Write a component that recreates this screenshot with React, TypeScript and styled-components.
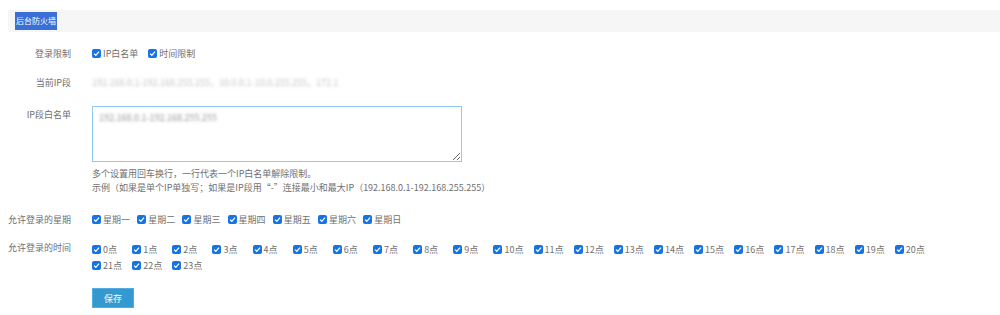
import React from 'react';
import styled, { createGlobalStyle } from 'styled-components';

const GlobalStyle = createGlobalStyle`
  html, body {
    margin: 0;
    padding: 0;
    background: #fff;
  }
  body {
    font-family: "Noto Sans CJK SC", "Noto Sans", sans-serif;
    font-size: 9px;
    color: #707070;
  }
`;

const Page = styled.div`
  padding-top: 10px;
  padding-left: 8px;
`;

const TitleBar = styled.div`
  height: 22px;
  background: #f6f6f6;
  display: flex;
  align-items: center;
  padding-left: 7px;
`;

const TitleTab = styled.div`
  height: 18px;
  padding: 0 1px;
  background: #3a6fd6;
  color: #fff;
  font-size: 8px;
  line-height: 18px;
`;

const Form = styled.div`
  display: flex;
  flex-direction: column;
`;

const Row = styled.div<{ $top: number; $align?: string }>`
  display: grid;
  grid-template-columns: 63px 1fr;
  column-gap: 21px;
  margin-top: ${(p) => p.$top}px;
  align-items: ${(p) => p.$align || 'center'};
  min-height: 20px;
`;

const Label = styled.div<{ $pad?: number }>`
  text-align: right;
  white-space: nowrap;
  color: #707070;
  padding-top: ${(p) => p.$pad || 0}px;
`;

const Field = styled.div`
  display: flex;
  flex-direction: column;
`;

const Options = styled.div<{ $width?: number }>`
  display: flex;
  flex-wrap: wrap;
  align-items: center;
  width: ${(p) => (p.$width ? `${p.$width}px` : 'auto')};
`;

const Option = styled.label<{ $width?: number; $gap?: number }>`
  display: inline-flex;
  align-items: center;
  gap: 2px;
  height: 16px;
  white-space: nowrap;
  margin-right: ${(p) => p.$gap || 0}px;
  width: ${(p) => (p.$width ? `${p.$width}px` : 'auto')};
  color: #707070;
`;

const Box = styled.span`
  width: 9px;
  height: 9px;
  border-radius: 2px;
  background: #1473e6;
  display: inline-flex;
  align-items: center;
  justify-content: center;
  flex: none;
`;

const Blurred = styled.span`
  color: transparent;
  text-shadow: 0 0 3px rgba(150, 150, 150, 0.55);
  white-space: nowrap;
`;

const TextArea = styled.textarea`
  box-sizing: border-box;
  width: 370px;
  height: 56px;
  border: 1px solid #8fcbec;
  outline: none;
  padding: 4px 6px;
  margin: 0;
  font-family: "Noto Sans CJK SC", "Noto Sans", sans-serif;
  font-size: 9px;
  line-height: 14px;
  color: transparent;
  text-shadow: 0 0 3px rgba(110, 110, 110, 0.7);
`;

const Help = styled.div`
  margin-top: 5px;
  line-height: 14px;
  color: #707070;
`;

const SaveButton = styled.button`
  width: 42px;
  height: 20px;
  border: 1px solid #55ace0;
  background: #3399d0;
  color: #fff;
  font-family: "Noto Sans CJK SC", "Noto Sans", sans-serif;
  font-size: 9px;
  padding: 0;
  cursor: pointer;
`;

const Check = () => (
  <Box>
    <svg width="7" height="7" viewBox="0 0 10 10">
      <path d="M1.5 5.2 L4 7.6 L8.6 2.2" fill="none" stroke="#fff" strokeWidth="1.8" />
    </svg>
  </Box>
);

const weekDays = ['星期一', '星期二', '星期三', '星期四', '星期五', '星期六', '星期日'];
const hours = Array.from({ length: 24 }, (_, i) => `${i}点`);

const App = () => (
  <Page>
    <GlobalStyle />
    <TitleBar>
      <TitleTab>后台防火墙</TitleTab>
    </TitleBar>
    <Form>
      <Row $top={11}>
        <Label>登录限制</Label>
        <Options>
          <Option $gap={10}>
            <Check />
            IP白名单
          </Option>
          <Option>
            <Check />
            时间限制
          </Option>
        </Options>
      </Row>
      <Row $top={9}>
        <Label>当前IP段</Label>
        <div>
          <Blurred>192.168.0.1-192.168.255.255，10.0.0.1-10.0.255.255，172.1</Blurred>
        </div>
      </Row>
      <Row $top={14} $align="start">
        <Label $pad={2}>IP段白名单</Label>
        <Field>
          <TextArea readOnly defaultValue="192.168.0.1-192.168.255.255" />
          <Help>
            多个设置用回车换行，一行代表一个IP白名单解除限制。
            <br />
            示例（如果是单个IP单独写；如果是IP段用“-”连接最小和最大IP（192.168.0.1-192.168.255.255）
          </Help>
        </Field>
      </Row>
      <Row $top={14}>
        <Label>允许登录的星期</Label>
        <Options>
          {weekDays.map((d) => (
            <Option key={d} $gap={7.2}>
              <Check />
              {d}
            </Option>
          ))}
        </Options>
      </Row>
      <Row $top={12} $align="start">
        <Label>允许登录的时间</Label>
        <Options $width={860}>
          {hours.map((h) => (
            <Option key={h} $width={40.15}>
              <Check />
              {h}
            </Option>
          ))}
        </Options>
      </Row>
      <Row $top={15}>
        <span />
        <div>
          <SaveButton>保存</SaveButton>
        </div>
      </Row>
    </Form>
  </Page>
);

export default App;
